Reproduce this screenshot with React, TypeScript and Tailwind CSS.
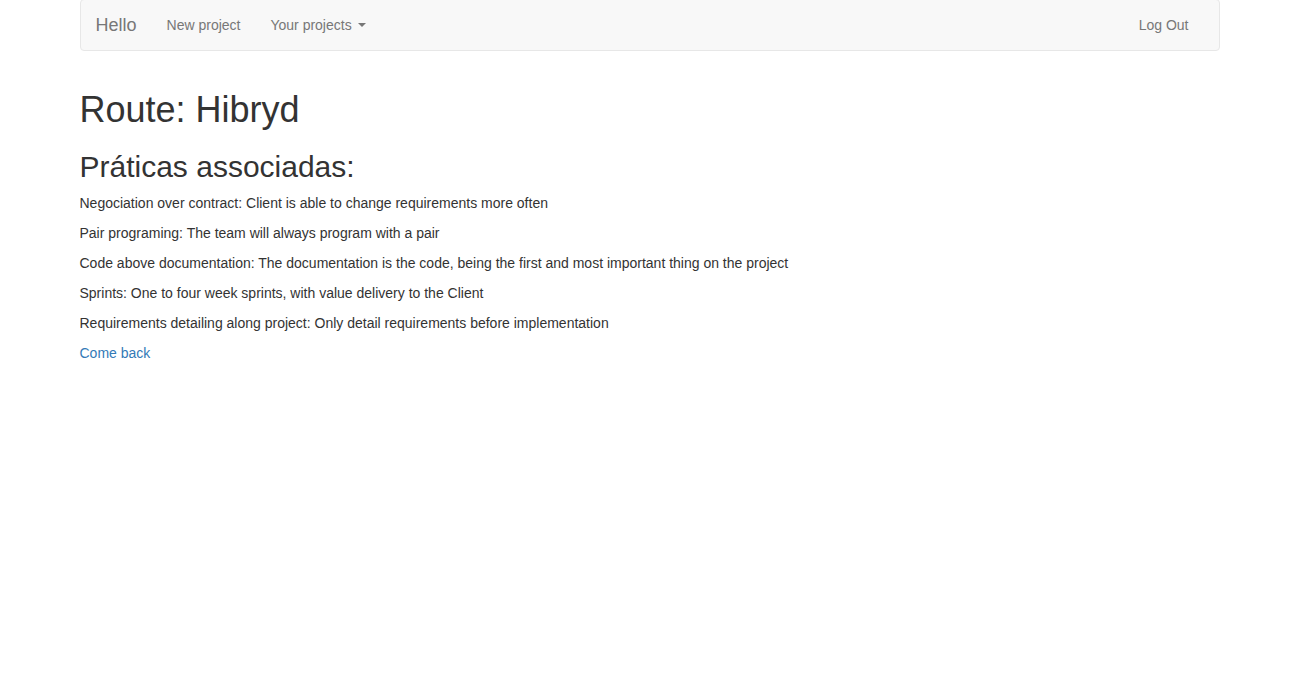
export default function App() {
  const practices = [
    "Negociation over contract: Client is able to change requirements more often",
    "Pair programing: The team will always program with a pair",
    "Code above documentation: The documentation is the code, being the first and most important thing on the project",
    "Sprints: One to four week sprints, with value delivery to the Client",
    "Requirements detailing along project: Only detail requirements before implementation",
  ]

  return (
    <div className="min-h-screen bg-white text-[14px] leading-[20px] text-[#333] font-['Liberation_Sans',Arial,sans-serif]">
      <div className="mx-auto w-[1170px] px-[15px]">
        <nav className="-mt-px mb-[20px] flex h-[52px] items-stretch justify-between rounded-[4px] border border-[#e7e7e7] bg-[#f8f8f8] px-[15px]">
          <div className="flex items-stretch">
            <a className="-ml-[15px] flex items-center px-[15px] text-[18px] text-[#777]">Hello</a>
            <a className="flex items-center px-[15px] text-[#777]">New project</a>
            <a className="flex items-center px-[15px] text-[#777]">
              Your projects
              <span className="ml-[6px] inline-block h-0 w-0 border-x-[4px] border-t-[4px] border-x-transparent border-t-[#777]" />
            </a>
          </div>
          <div className="flex items-stretch">
            <a className="flex items-center px-[15px] text-[#777]">Log Out</a>
          </div>
        </nav>

        <div>
          <h1 className="mb-[10px] mt-[39px] text-[36px] leading-[1.1] font-medium">Route: Hibryd</h1>
          <h2 className="mb-[10px] mt-[20px] text-[30px] leading-[1.1] font-medium">Práticas associadas:</h2>
          {practices.map((p) => (
            <p key={p} className="mb-[10px]">
              {p}
            </p>
          ))}
          <a className="text-[#337ab7]">Come back</a>
        </div>
      </div>
    </div>
  )
}
